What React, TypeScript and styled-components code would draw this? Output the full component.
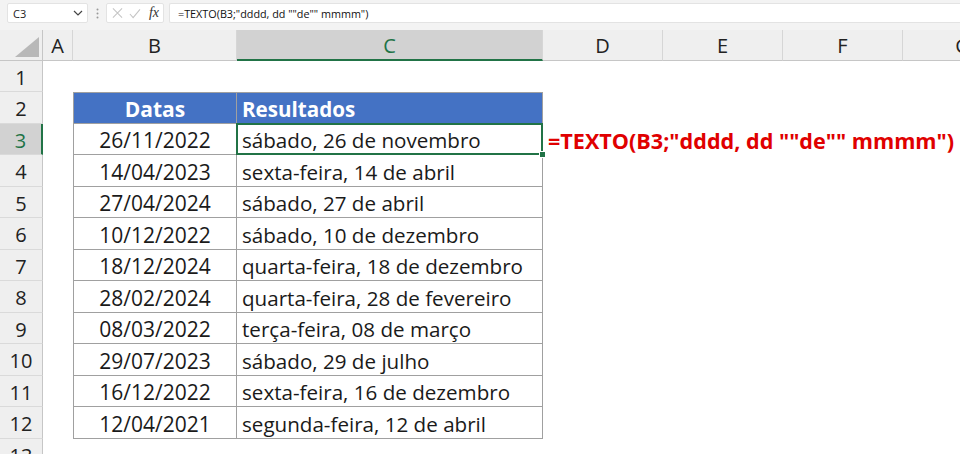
import React from 'react';
import styled, { createGlobalStyle, css } from 'styled-components';

const GlobalStyle = createGlobalStyle`
  html, body { margin: 0; padding: 0; background: #fff; overflow: hidden; }
  body { font-family: "Open Sans", "Noto Sans", sans-serif; }
`;

const Page = styled.div`
  width: 960px;
  height: 454px;
  overflow: hidden;
  background: #fff;
  display: flex;
  flex-direction: column;
`;

const FormulaBar = styled.div`
  height: 30px;
  box-sizing: border-box;
  background: #f3f3f3;
  display: flex;
  align-items: flex-start;
  padding: 3px 0 0 7px;
  flex: none;
`;

const NameBox = styled.div`
  width: 81px;
  height: 20px;
  box-sizing: border-box;
  background: #fff;
  border: 1px solid #e3e3e3;
  border-radius: 2px;
  display: flex;
  align-items: center;
  justify-content: space-between;
  padding: 0 4px 0 5px;
  font-size: 11px;
  color: #222;
`;

const Dots = styled.div`
  width: 18px;
  height: 20px;
  display: flex;
  align-items: center;
  justify-content: center;
`;

const FxBox = styled.div`
  width: 58px;
  height: 20px;
  box-sizing: border-box;
  background: #fff;
  border: 1px solid #e3e3e3;
  border-radius: 2px;
  display: flex;
  align-items: center;
  padding: 0 4px 0 5px;
  gap: 6px;
`;

const Fx = styled.span`
  font-family: "Liberation Serif", serif;
  font-style: italic;
  font-size: 14px;
  color: #333;
  margin-left: 2px;
`;

const FormulaInput = styled.div`
  flex: 1;
  margin-left: 5px;
  height: 20px;
  box-sizing: border-box;
  background: #fff;
  border: 1px solid #e3e3e3;
  border-right: none;
  border-radius: 2px 0 0 2px;
  display: flex;
  align-items: center;
  padding-left: 8px;
  font-size: 10.8px;
  color: #111;
  white-space: pre;
`;

const rowHeights = [31, 31, 32, 31, 32, 31, 32, 31, 32, 31, 32, 31, 32, 32];

const Sheet = styled.div`
  display: grid;
  grid-template-columns: 43px 30px 164px 306px 120px 120px 120px 120px;
  grid-template-rows: ${rowHeights.map((h) => `${h}px`).join(' ')};
  flex: none;
`;

const Corner = styled.div`
  background: #efefef;
  border-right: 1px solid #c6c6c6;
  border-bottom: 1px solid #c6c6c6;
  box-sizing: border-box;
  display: flex;
  align-items: flex-end;
  justify-content: flex-end;
  padding: 0 3px 3px 0;
`;

const ColHead = styled.div<{ $selected?: boolean }>`
  box-sizing: border-box;
  background: ${(p) => (p.$selected ? '#d2d2d2' : '#efefef')};
  border-right: 1px solid #d6d6d6;
  border-bottom: ${(p) => (p.$selected ? '2px solid #217346' : '1px solid #c6c6c6')};
  display: flex;
  align-items: center;
  justify-content: center;
  font-size: 20px;
  color: ${(p) => (p.$selected ? '#217346' : '#222')};
  padding-top: ${(p) => (p.$selected ? '1px' : '0')};
  overflow: hidden;
  white-space: nowrap;
`;

const RowHead = styled.div<{ $selected?: boolean }>`
  box-sizing: border-box;
  background: ${(p) => (p.$selected ? '#d2d2d2' : '#efefef')};
  border-bottom: 1px solid #dadada;
  border-right: ${(p) => (p.$selected ? '2px solid #217346' : '1px solid #c6c6c6')};
  display: flex;
  align-items: center;
  justify-content: center;
  font-size: 20px;
  color: ${(p) => (p.$selected ? '#217346' : '#222')};
  padding-top: 2px;
`;

const Cell = styled.div`
  display: flex;
  align-items: center;
  white-space: nowrap;
  overflow: visible;
  position: relative;
`;

const FormulaNote = styled(Cell)`
  padding-left: 5px;
  font-weight: 700;
  font-size: 21.6px;
  color: #e00000;
  z-index: 2;
  padding-top: 2px;
`;

const TableCell = styled.div<{
  $header?: boolean;
  $center?: boolean;
  $top?: boolean;
  $left?: boolean;
  $active?: boolean;
}>`
  box-sizing: border-box;
  display: flex;
  align-items: center;
  padding: 2px 5px 0;
  justify-content: ${(p) => (p.$center ? 'center' : 'flex-start')};
  font-size: ${(p) => (p.$center ? '21px' : '20.6px')};
  white-space: nowrap;
  position: relative;
  border-right: 1px solid #a0a0a0;
  border-bottom: 1px solid #a0a0a0;
  ${(p) => p.$top && css`border-top: 1px solid #a0a0a0;`}
  ${(p) => p.$left && css`border-left: 1px solid #a0a0a0;`}
  ${(p) =>
    p.$header
      ? css`
          background: #4472c4;
          color: #fff;
          font-weight: 700;
        `
      : css`
          background: #fff;
          color: #1a1a1a;
        `}
  ${(p) =>
    p.$active &&
    css`
      &::after {
        content: '';
        position: absolute;
        left: -1px;
        top: -1px;
        right: -1px;
        bottom: -1px;
        border: 2px solid #217346;
        pointer-events: none;
      }
      &::before {
        content: '';
        position: absolute;
        right: -4px;
        bottom: -4px;
        width: 5px;
        height: 5px;
        background: #217346;
        border: 1px solid #fff;
        z-index: 3;
      }
    `}
`;

const columns = ['A', 'B', 'C', 'D', 'E', 'F', 'G'];

const data: [string, string][] = [
  ['26/11/2022', 'sábado, 26 de novembro'],
  ['14/04/2023', 'sexta-feira, 14 de abril'],
  ['27/04/2024', 'sábado, 27 de abril'],
  ['10/12/2022', 'sábado, 10 de dezembro'],
  ['18/12/2024', 'quarta-feira, 18 de dezembro'],
  ['28/02/2024', 'quarta-feira, 28 de fevereiro'],
  ['08/03/2022', 'terça-feira, 08 de março'],
  ['29/07/2023', 'sábado, 29 de julho'],
  ['16/12/2022', 'sexta-feira, 16 de dezembro'],
  ['12/04/2021', 'segunda-feira, 12 de abril'],
];

const formula = '=TEXTO(B3;"dddd, dd ""de"" mmmm")';

export default function App() {
  const rows: React.ReactNode[] = [];
  for (let r = 1; r <= 13; r++) {
    rows.push(
      <RowHead key={`rh${r}`} $selected={r === 3}>
        {r}
      </RowHead>
    );
    rows.push(<Cell key={`a${r}`} />);
    if (r === 2) {
      rows.push(
        <TableCell key="b2" $header $center $top $left>
          Datas
        </TableCell>
      );
      rows.push(
        <TableCell key="c2" $header $top>
          Resultados
        </TableCell>
      );
    } else if (r >= 3 && r <= 12) {
      const [d, res] = data[r - 3];
      rows.push(
        <TableCell key={`b${r}`} $center $left>
          {d}
        </TableCell>
      );
      rows.push(
        <TableCell key={`c${r}`} $active={r === 3}>
          {res}
        </TableCell>
      );
    } else {
      rows.push(<Cell key={`b${r}`} />);
      rows.push(<Cell key={`c${r}`} />);
    }
    if (r === 3) {
      rows.push(<FormulaNote key="d3">{formula}</FormulaNote>);
    } else {
      rows.push(<Cell key={`d${r}`} />);
    }
    rows.push(<Cell key={`e${r}`} />);
    rows.push(<Cell key={`f${r}`} />);
    rows.push(<Cell key={`g${r}`} />);
  }

  return (
    <Page>
      <GlobalStyle />
      <FormulaBar>
        <NameBox>
          <span>C3</span>
          <svg width="10" height="6" viewBox="0 0 10 6">
            <path d="M1 1 L5 5 L9 1" fill="none" stroke="#444" strokeWidth="1.2" />
          </svg>
        </NameBox>
        <Dots>
          <svg width="3" height="11" viewBox="0 0 3 11">
            <circle cx="1.5" cy="1.5" r="1" fill="#999" />
            <circle cx="1.5" cy="5.5" r="1" fill="#999" />
            <circle cx="1.5" cy="9.5" r="1" fill="#999" />
          </svg>
        </Dots>
        <FxBox>
          <svg width="12" height="12" viewBox="0 0 12 12">
            <path d="M1 1 L11 11 M11 1 L1 11" stroke="#c4c4c4" strokeWidth="1.1" />
          </svg>
          <svg width="13" height="11" viewBox="0 0 13 11">
            <path d="M1 6 L4.5 10 L12 1" fill="none" stroke="#c4c4c4" strokeWidth="1.1" />
          </svg>
          <Fx>fx</Fx>
        </FxBox>
        <FormulaInput>{formula}</FormulaInput>
      </FormulaBar>
      <Sheet>
        <Corner>
          <svg width="24" height="20" viewBox="0 0 24 20">
            <polygon points="24,0 24,20 0,20" fill="#b8b8b8" />
          </svg>
        </Corner>
        {columns.map((c) => (
          <ColHead key={c} $selected={c === 'C'}>
            {c}
          </ColHead>
        ))}
        {rows}
      </Sheet>
    </Page>
  );
}
